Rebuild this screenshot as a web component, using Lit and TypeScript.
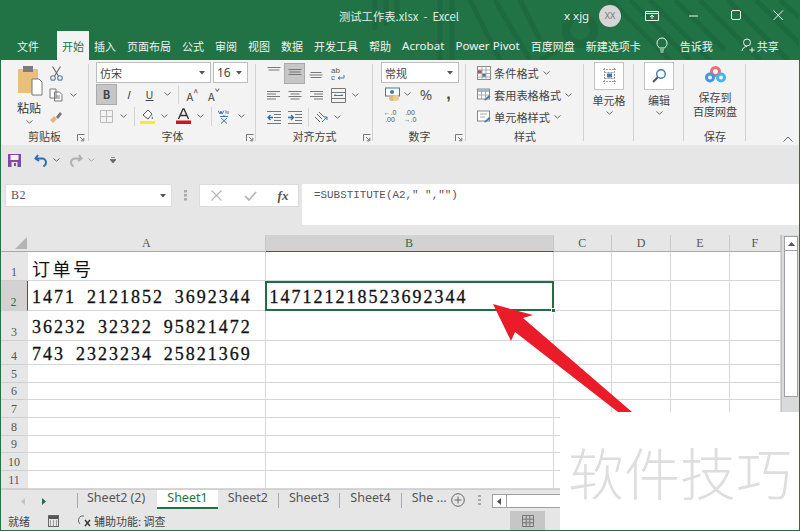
import { LitElement, html, css, svg } from "lit";
import { customElement } from "lit/decorators.js";

const chev = html`<svg class="chev" width="7" height="4" viewBox="0 0 7 4"><path d="M.5.5 3.5 3.2 6.5.5" fill="none" stroke="#666" stroke-width="1"/></svg>`;
const launcher = html`<svg class="launch" width="8" height="8" viewBox="0 0 8 8"><path d="M.5 7V.5H7.5M3 3l3.6 3.6M6.8 3.8v3H3.8" fill="none" stroke="#777" stroke-width="1"/></svg>`;
const caret = html`<svg width="6" height="4" viewBox="0 0 6 4"><path d="M0 0h6L3 3.5z" fill="#555"/></svg>`;
const lines = (w: number[], y0: number, a: "l" | "c" | "r", stroke = "#777") => html`<svg width="16" height="14" viewBox="0 0 16 14">${w.map((l, i) => {
  const x = a === "l" ? 1 : a === "r" ? 15 - l : 8 - l / 2;
  return svg`<path d="M${x} ${y0 + i * 2.5 + 0.5}h${l}" stroke="${stroke}" stroke-width="1"/>`;
})}</svg>`;

const COLS = ["A", "B", "C", "D", "E", "F"];
const ROWS = [1, 2, 3, 4, 5, 6, 7, 8, 9, 10, 11];
const CELLS: Record<string, string> = {
  A1: "订单号",
  A2: "1471 2121852 3692344",
  A3: "36232 32322 95821472",
  A4: "743 2323234 25821369",
  B2: "147121218523692344",
};
const MENU = ["插入", "页面布局", "公式", "审阅", "视图", "数据", "开发工具", "帮助", "Acrobat", "Power Pivot", "百度网盘", "新建选项卡"];

@customElement("app-root")
export class AppRoot extends LitElement {
  static styles = css`
    :host { display: block; width: 800px; height: 531px; position: relative; overflow: hidden; background: #e6e6e6;
      font-family: "Noto Sans CJK SC", "Noto Sans", sans-serif; color: #444; box-sizing: border-box; }
    * { box-sizing: border-box; }
    svg { display: block; flex: none; }

    .head { height: 60px; background: #217346; position: relative; color: #eef5f0; overflow: hidden; }
    .pattern { position: absolute; left: 0; top: 0; }
    .titlebar { height: 31px; display: flex; align-items: center; position: relative; font-size: 11.3px; }
    .doc { margin-left: 339px; width: 225px; color: #dfeee5; padding-top: 1px; white-space: pre; }
    .user { width: 35px; font-family: "Noto Sans", sans-serif; font-size: 11.5px; }
    .avatar { width: 22px; height: 22px; border-radius: 50%; background: #d6d6d6; color: #777; font-size: 9px; display: flex; align-items: center; justify-content: center; font-family: "Noto Sans", sans-serif; }
    .winbtns { display: flex; margin-left: 10px; }
    .winbtn { width: 42px; height: 16px; display: flex; align-items: center; justify-content: center; }
    .menu { height: 29px; display: flex; align-items: center; gap: 11px; position: relative; padding-left: 17px; font-size: 11px; }
    .menu span { white-space: nowrap; }
    .m-active { background: #f3f3f3; color: #217346; height: 29px; width: 32px; margin-left: 7px; margin-right: -6px; display: flex; align-items: center; justify-content: center; }
    .m-latin { font-family: "Noto Sans", sans-serif; font-size: 11.6px; }
    .tell { display: flex; align-items: center; margin-left: 4px; gap: 12px; }
    .share { display: flex; align-items: center; margin-left: 17px; gap: 2px; }

    .ribbon { height: 85px; background: #f3f3f3; display: flex; position: relative; font-size: 11px; }
    .group { position: relative; height: 85px; display: flex; flex-direction: column; }
    .group::after { content: ""; position: absolute; right: 0; top: 4px; bottom: 4px; width: 1px; background: #d2d2d2; }
    .body { height: 69px; padding-top: 2px; }
    .glabel { height: 16px; line-height: 14px; text-align: center; font-size: 11px; color: #444; position: relative; }
    .launch { position: absolute; right: 3px; top: 5px; }
    .g1 { width: 89px; } .g2 { width: 167px; } .g3 { width: 117px; } .g4 { width: 93px; }
    .g5 { width: 118px; } .g6, .g7 { width: 50px; } .g8 { width: 62px; }
    .g1 .launch { right: 4px; } .g2 .launch { right: 2px; } .g3 .launch { right: 2px; } .g4 .launch { right: 3px; }
    .r { height: 22px; display: grid; align-items: center; justify-items: center; }
    .clip { display: grid; grid-template-columns: 38px 16px 18px; grid-auto-rows: 22px; padding-left: 10px; }
    .paste { display: flex; flex-direction: column; align-items: center; padding-top: 3px; grid-row: 1 / 4; }
    .paste span { font-size: 12px; margin-top: 5px; line-height: 14px; color: #333; white-space: nowrap; }
    .paste .chev { margin-top: 5px; }
    .clip .c { height: 22px; display: flex; align-items: center; justify-content: center; }
    .ctl { display: flex; gap: 2px; padding-left: 7px; }
    .select { height: 21px; background: #fff; border: 1px solid #bdbdbd; display: flex; align-items: center; justify-content: space-between; padding: 0 5px 0 3px; font-size: 11px; color: #444; }
    .font-name { width: 115px; } .font-size { width: 35px; font-family: "Noto Sans", sans-serif; font-size: 12px; }
    .num-sel { width: 78px; margin-left: 8px; }
    .f2 { grid-template-columns: 21px 22px 21px 14px 8px 21px 22px; padding-left: 7px; justify-content: start; }
    .f3 { grid-template-columns: 20px 14px 8px 20px 12px 26px 8px 14px 12px 22px; padding-left: 7px; justify-content: start; }
    .press { background: #c6c6c6; height: 21px; width: 100%; display: flex; align-items: center; justify-content: center; border: 1px solid #aaa; }
    .sep { width: 1px; height: 19px; background: #d4d4d4; }
    .a1 { grid-template-columns: 21px 21px 22px 22px; padding-left: 7px; justify-content: start; }
    .a2 { grid-template-columns: 21px 21px 22px 22px 13px; padding-left: 7px; justify-content: start; }
    .a3 { grid-template-columns: 21px 21px 6px 20px 12px; padding-left: 7px; justify-content: start; }
    .n2 { grid-template-columns: 22px 8px 4px 22px 23px; padding-left: 8px; justify-content: start; }
    .n3 { grid-template-columns: 20px 20px; padding-left: 7px; justify-content: start; }
    .pct { font-size: 15px; font-family: "Noto Sans", sans-serif; color: #555; }
    .comma { font-size: 16px; font-weight: 700; color: #444; line-height: 12px; font-family: "Liberation Sans", sans-serif; }
    .dec { font-size: 7px; line-height: 7px; font-family: "Liberation Sans", sans-serif; text-align: center; color: #555; }
    .dec b { color: #2a6fb0; }
    .style { height: 22px; display: flex; align-items: center; padding-left: 11px; font-size: 11.2px; color: #444; }
    .style svg:first-child { margin-right: 3px; }
    .style .chev { margin-left: 4px; }
    .large { display: flex; flex-direction: column; align-items: center; padding-top: 2px; }
    .lbox { width: 30px; height: 28px; background: #fff; border: 1px solid #c4c4c4; display: flex; align-items: center; justify-content: center; }
    .large span { margin-top: 3px; line-height: 14px; font-size: 11px; }
    .large .chev { margin-top: 4px; }
    .baidu { padding-top: 6px; }
    .baidu .first-line { margin-top: 7px; }
    .baidu span { display: block; height: 14px; margin-top: 0; overflow: hidden; text-align: center; white-space: nowrap; }
    .collapse { position: absolute; right: 7px; bottom: 3px; }

    .qat { height: 30px; background: #e6e6e6; display: flex; align-items: center; padding-left: 8px; }
    .qat .q2 { margin-left: 13px; } .qat .chev { margin-left: 5px; } .qat .q3 { margin-left: 9px; } .qat .q4 { margin-left: 15px; }

    .formula { height: 60px; padding: 9px 0 0 5px; display: flex; align-items: flex-start; }
    .namebox { width: 167px; height: 23px; background: #fff; border: 1px solid #dcdcdc; display: flex; align-items: center; justify-content: space-between; padding: 0 5px; font-family: "Liberation Serif", serif; font-size: 12px; color: #555; letter-spacing: .4px; }
    .dots { width: 27px; height: 23px; display: flex; align-items: center; justify-content: center; }
    .fbtns { width: 100px; height: 23px; background: #fff; border: 1px solid #dcdcdc; display: grid; grid-template-columns: 33px 34px 32px; align-items: center; justify-items: center; }
    .fx { font-family: "Liberation Serif", serif; font-style: italic; font-weight: 700; font-size: 13px; color: #555; }
    .finput { margin-left: 3px; width: 498px; height: 41px; background: #fff; padding: 4px 0 0 12px; font-family: "Liberation Mono", monospace; font-size: 10.9px; color: #555; line-height: 15px; }

    .sheet { display: flex; height: 254px; }
    .grid { width: 781px; height: 254px; display: grid; grid-template-columns: 28px 237.5px 288px 58.5px 59px 59px 50.5px;
      grid-template-rows: 17px 29px 30px 30px 24px 18px 17px 18px 18px 17px 18px 18px; background: #fff; position: relative; }
    .corner { background: #e6e6e6; border-bottom: 1px solid #a9a9a9; display: flex; align-items: flex-end; justify-content: flex-end; padding: 0 1px 2px 0; }
    .chead { background: #e6e6e6; border-right: 1px solid #c8c8c8; border-bottom: 1px solid #a9a9a9; text-align: center; font-family: "Liberation Serif", serif; font-size: 12px; line-height: 17px; color: #555; }
    .chead.sel { background: #d2d2d2; border-bottom: 1px solid #1f7245; color: #2c6e4b; }
    .rhead { background: #e6e6e6; border-bottom: 1px solid #cfcfcf; font-family: "Liberation Serif", serif; font-size: 12px; text-align: center; color: #555; display: flex; align-items: flex-end; justify-content: center; line-height: 15px; }
    .rhead.sel { background: #d2d2d2; border-right: 1px solid #1f7245; color: #2c6e4b; }
    .cell { border-right: 1px solid #d6d6d6; border-bottom: 1px solid #d6d6d6; font-family: "Liberation Serif", "Noto Sans CJK SC", serif; font-size: 18px; letter-spacing: 2px; word-spacing: 4.4px; -webkit-text-stroke: .3px #111; color: #111; padding: 0 0 0 4px; display: flex; align-items: flex-end; line-height: 25px; white-space: nowrap; overflow: hidden; }
    .cell.low { line-height: 20px; }
    .cell.cjk { font-family: "Noto Sans CJK SC", serif; letter-spacing: 2.5px; line-height: 24px; font-size: 18px; -webkit-text-stroke: 0; }
    .picked { position: absolute; left: 265px; top: 46px; width: 289px; height: 30px; border: 2px solid #1f6f45; pointer-events: none; }
    .handle { position: absolute; right: -4px; bottom: -4px; width: 5px; height: 5px; background: #1f6f45; border: 1px solid #fff; }
    .vbar { width: 18px; height: 254px; background: #dadada; padding: 1px 2px 0 2px; border-left: 1px solid #c4c4c4; }
    .vwrap { height: 253px; display: flex; flex-direction: column; margin-right: -1px; }
    .vup { height: 15px; background: #fff; border: 1px solid #9f9f9f; display: flex; align-items: center; justify-content: center; }
    .vthumb { height: 146px; background: #fff; border: 1px solid #9f9f9f; border-top: none; }

    .tabs { height: 22px; background: #e6e6e6; display: flex; align-items: flex-start; font-size: 12.5px; font-family: "Noto Sans", sans-serif; color: #555; border-top: 1px solid #cfcfcf; }
    .nav { width: 77px; height: 19px; display: flex; align-items: center; padding: 4px 0 0 21px; gap: 17px; }
    .tsep { width: 1px; height: 15px; margin-top: 3px; background: #a9a9a9; flex: none; }
    .tab { padding: 0 10px; height: 19px; line-height: 16px; white-space: nowrap; }
    .tab.first { padding: 0 12px 0 9px; }
    .tab.on { background: #fff; color: #217346; border-bottom: 2px solid #217346; padding: 0 10px; }
    .plus { margin: 3px 0 0 -6px; } .tabdots { margin: 5px 0 0 13px; }
    .hbar { margin: 4px 0 0 11px; width: 120px; height: 14px; background: #fff; border: 1px solid #9f9f9f; display: flex; }
    .hbtn { width: 14px; border-right: 1px solid #9f9f9f; display: flex; align-items: center; justify-content: center; }

    .status { height: 20px; background: #e6e6e6; display: flex; align-items: center; padding-left: 8px; font-size: 11px; color: #444; position: relative; }
    .status .s2 { margin-left: 18px; } .status .s3 { margin-left: 18px; } .status .s4 { margin-left: 2px; }
    .viewbtn { position: absolute; left: 510px; top: 0; width: 35px; height: 20px; background: #c6c6c6; display: flex; align-items: center; justify-content: center; }

    .frame { position: absolute; inset: 0; border: 1px solid #217346; border-top: none; pointer-events: none; }
    .arrow { position: absolute; left: 480px; top: 290px; }
    .cover { position: absolute; left: 560px; top: 412px; width: 240px; height: 119px; background: #fff; display: flex; justify-content: center; padding-top: 19px; color: #dedede; font-size: 56px; font-weight: 300; line-height: 80px; white-space: nowrap; }
  `;

  render() {
    return html`
      <div class="head">
        <svg class="pattern" width="800" height="60" viewBox="0 0 800 60" fill="none" stroke="#1e6a40" stroke-width="5">
          <path d="M375 0v30M386 0v26M397 0v18M440 0v60M452 0v60M470 0l30 60M495 0l35 60M520 0l20 40"/>
          <circle cx="580" cy="30" r="14" stroke-width="8"/>
          <path d="M610 0l60 60M630 0l60 60M650 0l60 60M675 0l50 50M700 0l60 60M728 0l60 60M756 0l44 44M560 48l-20 12M780 0l20 18"/>
        </svg>
        <div class="titlebar">
          <span class="doc">测试工作表.xlsx  -  Excel</span>
          <span class="user">x xjg</span>
          <span class="avatar">XX</span>
          <div class="winbtns">
            <div class="winbtn"><svg width="14" height="12" viewBox="0 0 14 12" fill="none" stroke="#eef5f0"><path d="M1 3.5h12M.5 1.5h13v9H.5zM7 9V5M5 7l2-2 2 2"/></svg></div>
            <div class="winbtn"><svg width="10" height="2" viewBox="0 0 10 2"><path d="M0 1h9" stroke="#eef5f0"/></svg></div>
            <div class="winbtn"><svg width="11" height="11" viewBox="0 0 11 11"><rect x=".5" y=".5" width="9" height="9" rx="1.5" fill="none" stroke="#eef5f0"/></svg></div>
            <div class="winbtn"><svg width="11" height="11" viewBox="0 0 11 11"><path d="M.5.5l9.5 9.5M10 .5.5 10" stroke="#eef5f0"/></svg></div>
          </div>
        </div>
        <div class="menu">
          <span>文件</span>
          <span class="m-active">开始</span>
          ${MENU.map((m) => html`<span class="${/^[A-Za-z]/.test(m) ? "m-latin" : ""}">${m}</span>`)}
          <div class="tell">
            <svg width="12" height="17" viewBox="0 0 12 17" fill="none" stroke="#eef5f0"><path d="M3.5 11C2 9.5 1 8 1 6a5 5 0 0 1 10 0c0 2-1 3.500-2.500 5zM4 13h4M4.500 15h3"/></svg>
            <span>告诉我</span>
          </div>
          <div class="share">
            <svg width="14" height="15" viewBox="0 0 14 15" fill="none" stroke="#eef5f0"><circle cx="6" cy="4.500" r="3.500"/><path d="M1 13c.5-3 2.500-4.500 5-4.500M8.500 12h5M11 9.500v5"/></svg>
            <span>共享</span>
          </div>
        </div>
      </div>

      <div class="ribbon">
        <div class="group g1">
          <div class="body clip">
            <div class="paste">
              <svg width="28" height="31" viewBox="0 0 28 31"><rect x="3" y="4" width="20" height="24" fill="#e8bf7b"/><rect x="8" y="1" width="10" height="6" fill="#7d7d7d"/><path d="M17 14h7l3 3v13H17z" fill="#fff" stroke="#777"/></svg>
              <span>粘贴</span>${chev}
            </div>
            <div class="c"><svg width="13" height="15" viewBox="0 0 13 15" fill="none" stroke="#5d7fa8" stroke-width="1.100"><path d="M2.500 .5 8.500 10M10.500 .5 4.500 10" stroke="#666"/><circle cx="3" cy="12" r="2.300"/><circle cx="10" cy="12" r="2.300"/></svg></div>
            <div></div>
            <div class="c"><svg width="14" height="14" viewBox="0 0 14 14" fill="#fff" stroke="#777"><path d="M1 1h6v9H1zM5.500 4h5l2.500 2.500V13H5.500z"/><path d="M7 8h4M7 10h4" /></svg></div>
            <div class="c">${chev}</div>
            <div class="c"><svg width="14" height="13" viewBox="0 0 14 13"><path d="M1 9l4-4 3 3-4 4z" fill="#e2b877"/><path d="M7 6l4-5 2 2-4 5z" fill="#777"/></svg></div>
          </div>
          <div class="glabel">剪贴板${launcher}</div>
        </div>

        <div class="group g2">
          <div class="body">
            <div class="ctl r-top">
              <div class="select font-name"><span>仿宋</span>${caret}</div>
              <div class="select font-size"><span>16</span>${caret}</div>
            </div>
            <div class="r f2">
              <div class="press"><b class="bold">B</b></div>
              <i>I</i>
              <u>U</u>
              ${chev}
              <div class="sep"></div>
              <span class="aa">A<sup>^</sup></span>
              <span class="aa">A<sup>ˇ</sup></span>
            </div>
            <div class="r f3">
              <svg width="13" height="13" viewBox="0 0 13 13" fill="none" stroke="#bbb"><path d="M.5.5h12v12H.5zM6.500.5v12M.5 6.500h12"/></svg>
              ${chev}
              <div class="sep"></div>
              <svg width="16" height="16" viewBox="0 0 16 16"><path d="M3 7l5-5 4 4-4 5z" fill="#fff" stroke="#555"/><path d="M12 8c1 1.500 1.500 2 1 3h-1.500z" fill="#5a8ec0"/><rect x="0" y="13" width="15" height="3" fill="#f5ea2d"/></svg>
              ${chev}
              <svg width="15" height="16" viewBox="0 0 15 16"><path d="M2.500 11 7 1h1l4.500 10M4.500 7.500h6" fill="none" stroke="#333" stroke-width="1.400"/><rect y="12.500" width="15" height="3.500" fill="#d2151c"/></svg>
              ${chev}
              <div class="sep"></div>
              <svg width="12" height="15" viewBox="0 0 12 15" fill="none" stroke="#3f78ae"><path d="M0 1.500 2 5l1-3 1 3 2-3.500M8 1.500v3M10 5V2M2 7.500h8M3 9l6 5.500M9 9 3 14.500M6 6v1.500"/></svg>
              ${chev}
            </div>
          </div>
          <div class="glabel">字体${launcher}</div>
        </div>

        <div class="group g3">
          <div class="body">
            <div class="r a1">
              ${lines([13, 11], 1, "c")}
              <div class="press">${lines([13, 11, 13], 3, "c")}</div>
              ${lines([11, 13, 11], 6, "c")}
              <svg width="16" height="15" viewBox="0 0 16 15"><text x="1" y="6.500" font-size="8" fill="#555" font-family="Liberation Sans">ab</text><text x="1" y="14" font-size="8" fill="#555" font-family="Liberation Sans">c</text><path d="M14 9v3H8l2-1.500M8 12l2 1.500" fill="none" stroke="#3f78ae"/></svg>
            </div>
            <div class="r a2">
              ${lines([13, 9, 13, 9], 3, "l")}
              ${lines([13, 9, 13, 9], 3, "c")}
              ${lines([13, 9, 13, 9], 3, "r")}
              <svg width="15" height="15" viewBox="0 0 15 15" fill="none" stroke="#777"><path d="M.5.5h14v14H.5zM.5 4.500h14M.5 10.500h14"/><path d="M3 7.500h9M3 7.500l1.500-1M12 7.500l-1.500-1" stroke="#3f78ae"/></svg>
              ${chev}
            </div>
            <div class="r a3">
              <svg width="14" height="13" viewBox="0 0 14 13" fill="none" stroke="#777"><path d="M0 .5h14M7 3.500h7M7 6.500h7M7 9.500h7M0 12.500h14"/><path d="M6 6.500H1M3.500 4 1 6.500 3.500 9" stroke="#2a6fb0" stroke-width="1.300"/></svg>
              <svg width="14" height="13" viewBox="0 0 14 13" fill="none" stroke="#777"><path d="M0 .5h14M7 3.500h7M7 6.500h7M7 9.500h7M0 12.500h14"/><path d="M0 6.500h5M3 4l2.500 2.500L3 9" stroke="#2a6fb0" stroke-width="1.300"/></svg>
              <div class="sep"></div>
              <svg width="15" height="14" viewBox="0 0 15 14" fill="none" stroke="#666"><path d="M1 7l5 5M3 4l5 5M5 2l5 5" /><path d="M8 12l5-5M13 7v3M13 7h-3" stroke="#3f78ae"/></svg>
              ${chev}
            </div>
          </div>
          <div class="glabel">对齐方式${launcher}</div>
        </div>

        <div class="group g4">
          <div class="body">
            <div class="select num-sel"><span>常规</span>${caret}</div>
            <div class="r n2">
              <svg width="15" height="15" viewBox="0 0 15 15"><rect x=".5" y="1" width="14" height="8" fill="#fff" stroke="#3f78ae"/><circle cx="7" cy="5" r="2" fill="#3f78ae"/><circle cx="7" cy="11" r="3" fill="#e2b877"/><circle cx="11" cy="11" r="3" fill="#eecb8f"/></svg>
              ${chev}
              <span></span>
              <span class="pct">%</span>
              <span class="comma">,</span>
            </div>
            <div class="r n3">
              <div class="dec"><b>←</b>.0<br />.00</div>
              <div class="dec">.00<br /><b>→</b>.0</div>
            </div>
          </div>
          <div class="glabel">数字${launcher}</div>
        </div>

        <div class="group g5">
          <div class="body">
            <div class="style">
              <svg width="14" height="14" viewBox="0 0 14 14"><rect x=".5" y=".5" width="13" height="13" fill="#fff" stroke="#888"/><path d="M1 4h4v3H1z" fill="#b3514f"/><path d="M5 8h4v3H5z" fill="#3f78ae"/><path d="M5 .5v13M9 .5v13M.5 4h13M.5 7.500h13M.5 11h13" stroke="#aaa" fill="none"/></svg>
              <span>条件格式</span>${chev}
            </div>
            <div class="style">
              <svg width="14" height="14" viewBox="0 0 14 14"><rect x=".5" y="1" width="12" height="10" fill="#fff" stroke="#888"/><path d="M1 1h11v3H1z" fill="#9fb8d4"/><path d="M.5 7h12M4.500 1v10M8.500 1v10" stroke="#aaa"/><path d="M7 12l5-5 1.500 1.500-5 4z" fill="#3f78ae"/></svg>
              <span>套用表格格式</span>${chev}
            </div>
            <div class="style">
              <svg width="14" height="14" viewBox="0 0 14 14"><rect x=".5" y="1" width="12" height="10" fill="#fff" stroke="#888"/><path d="M3 4h7M3 7h5" stroke="#aaa"/><path d="M7 12l5-5 1.500 1.500-5 4z" fill="#3f78ae"/></svg>
              <span>单元格样式</span>${chev}
            </div>
          </div>
          <div class="glabel">样式</div>
        </div>

        <div class="group g6">
          <div class="body large">
            <div class="lbox"><svg width="15" height="18" viewBox="0 0 15 18" fill="none" stroke="#999"><path d="M1 2.500h13M1 14.500h13M2.500 1v16M12.500 1v16M2.500 5.500h10M2.500 11.500h10" stroke-dasharray="2 1"/><rect x="5" y="6.500" width="5" height="4" fill="#3f78ae" stroke="none"/></svg></div>
            <span>单元格</span>${chev}
          </div>
          <div class="glabel"></div>
        </div>

        <div class="group g7">
          <div class="body large">
            <div class="lbox"><svg width="16" height="16" viewBox="0 0 16 16" fill="none"><circle cx="10" cy="6" r="4.300" stroke="#3f78ae" stroke-width="1.400"/><path d="M6.800 9.200 2 14" stroke="#555" stroke-width="2"/></svg></div>
            <span>编辑</span>${chev}
          </div>
          <div class="glabel"></div>
        </div>

        <div class="group g8">
          <div class="body large baidu">
            <svg width="21" height="17" viewBox="0 0 21 17" fill="none" stroke-width="3"><circle cx="10.500" cy="5.500" r="4" stroke="#e3717a"/><circle cx="5" cy="11.500" r="3.500" stroke="#3d9be0"/><circle cx="16" cy="11.500" r="3.500" stroke="#43b6e8"/></svg>
            <span class="first-line">保存到</span>
            <span>百度网盘</span>
          </div>
          <div class="glabel">保存</div>
        </div>
        <svg class="collapse" width="10" height="6" viewBox="0 0 10 6"><path d="M.5 5.500 5 1l4.500 4.500" fill="none" stroke="#666"/></svg>
      </div>

      <div class="qat">
        <svg width="13" height="13" viewBox="0 0 13 13"><rect width="13" height="13" fill="#7d4c9e"/><rect x="2.500" y="1" width="8" height="5" fill="#f3eef7"/><rect x="3.500" y="8" width="6" height="5" fill="#e6e6e6"/><rect x="6" y="9" width="2" height="3" fill="#7d4c9e"/></svg>
        <svg class="q2" width="14" height="13" viewBox="0 0 14 13" fill="none" stroke="#2a6fb0" stroke-width="2"><path d="M4 1 1.500 4.500 5 7M2 4.500h6a4 4 0 0 1 4 4c0 2-1 3-2.500 4"/></svg>
        ${chev}
        <svg class="q3" width="14" height="13" viewBox="0 0 14 13" fill="none" stroke="#b0b0b0" stroke-width="2"><path d="M10 1l2.500 3.500L9 7M12 4.500H6a4 4 0 0 0-4 4c0 2 1 3 2.500 4"/></svg>
        <svg class="chev" width="7" height="4" viewBox="0 0 7 4"><path d="M.5.5 3.500 3.200 6.500.5" fill="none" stroke="#aaa"/></svg>
        <svg class="q4" width="6" height="6" viewBox="0 0 6 6"><path d="M1 .5h4M0 2.500h6L3 6z" stroke="#666" stroke-width=".7" fill="#666"/></svg>
      </div>

      <div class="formula">
        <div class="namebox"><span>B2</span>${caret}</div>
        <div class="dots"><svg width="3" height="11" viewBox="0 0 3 11" fill="#aaa"><rect y="0" width="3" height="2.500"/><rect y="4" width="3" height="2.500"/><rect y="8" width="3" height="2.500"/></svg></div>
        <div class="fbtns">
          <svg width="11" height="11" viewBox="0 0 11 11"><path d="M.5.5l10 10M10.500.5l-10 10" stroke="#b8b8b8" stroke-width="1.200"/></svg>
          <svg width="13" height="10" viewBox="0 0 13 10"><path d="M1 5l4 4 7-8" fill="none" stroke="#b8b8b8" stroke-width="1.800"/></svg>
          <span class="fx">fx</span>
        </div>
        <div class="finput">=SUBSTITUTE(A2," ","")</div>
      </div>

      <div class="sheet">
        <div class="grid">
          <div class="corner"><svg width="12" height="12" viewBox="0 0 12 12"><path d="M12 0v12H0z" fill="#b4b4b4"/></svg></div>
          ${COLS.map((c) => html`<div class="chead ${c === "B" ? "sel" : ""}">${c}</div>`)}
          ${ROWS.map((r) => html`
            <div class="rhead ${r === 2 ? "sel" : ""}">${r}</div>
            ${COLS.map((c) => {
              const id = c + r;
              return html`<div class="cell ${id === "A1" ? "cjk" : ""} ${r === 4 ? "low" : ""}">${CELLS[id] ?? ""}</div>`;
            })}
          `)}
          <div class="picked"><div class="handle"></div></div>
        </div>
        <div class="vbar"><div class="vwrap">
          <div class="vup"><svg width="7" height="4" viewBox="0 0 7 4"><path d="M3.500 0 7 4H0z" fill="#555"/></svg></div>
          <div class="vthumb"></div>
        </div></div>
      </div>

      <div class="tabs">
        <div class="nav">
          <svg width="4" height="7" viewBox="0 0 4 7"><path d="M4 0v7L0 3.500z" fill="#c4c4c4"/></svg>
          <svg width="4" height="7" viewBox="0 0 4 7"><path d="M0 0v7l4-3.500z" fill="#1f6f45"/></svg>
        </div>
        <div class="tsep"></div>
        <div class="tab first">Sheet2 (2)</div>
        <div class="tab on">Sheet1</div>
        <div class="tab">Sheet2</div><div class="tsep"></div>
        <div class="tab">Sheet3</div><div class="tsep"></div>
        <div class="tab">Sheet4</div><div class="tsep"></div>
        <div class="tab">She ...</div>
        <svg class="plus" width="14" height="14" viewBox="0 0 14 14" fill="none" stroke="#666"><circle cx="7" cy="7" r="6.300"/><path d="M3.500 7h7M7 3.500v7"/></svg>
        <svg class="tabdots" width="3" height="10" viewBox="0 0 3 10" fill="#aaa"><rect width="3" height="2"/><rect y="4" width="3" height="2"/><rect y="8" width="3" height="2"/></svg>
        <div class="hbar"><div class="hbtn"><svg width="4" height="7" viewBox="0 0 4 7"><path d="M4 0v7L0 3.500z" fill="#555"/></svg></div></div>
      </div>

      <div class="status">
        <span>就绪</span>
        <svg class="s2" width="11" height="12" viewBox="0 0 11 12"><rect x=".5" y=".5" width="10" height="11" fill="none" stroke="#666"/><rect x="1" y="1" width="9" height="3" fill="#555"/><path d="M2 6h1M5 6h1M8 6h1M2 8h1M5 8h1M8 8h1M2 10h1M5 10h1M8 10h1" stroke="#555"/></svg>
        <svg class="s3" width="15" height="14" viewBox="0 0 15 14" fill="none" stroke="#666"><path d="M4 2a5 5 0 0 0-1 8M4 2h3"/><path d="M8 6l5 6M13 6l-5 6" stroke="#333" stroke-width="1.400"/></svg>
        <span class="s4">辅助功能: 调查</span>
        <div class="viewbtn"><svg width="12" height="12" viewBox="0 0 12 12" fill="none" stroke="#777"><path d="M.5.5h11v11H.5zM4.200.5v11M7.800.5v11M.5 4.200h11M.5 7.800h11"/></svg></div>
      </div>

      <svg class="arrow" width="160" height="125" viewBox="480 290 160 125"><path d="M493 304 533 315 523 318 632 412H618L515 332 511 341z" fill="#ea1c2a"/></svg>
      <div class="cover">软件技巧</div>
      <div class="frame"></div>
    `;
  }
}
